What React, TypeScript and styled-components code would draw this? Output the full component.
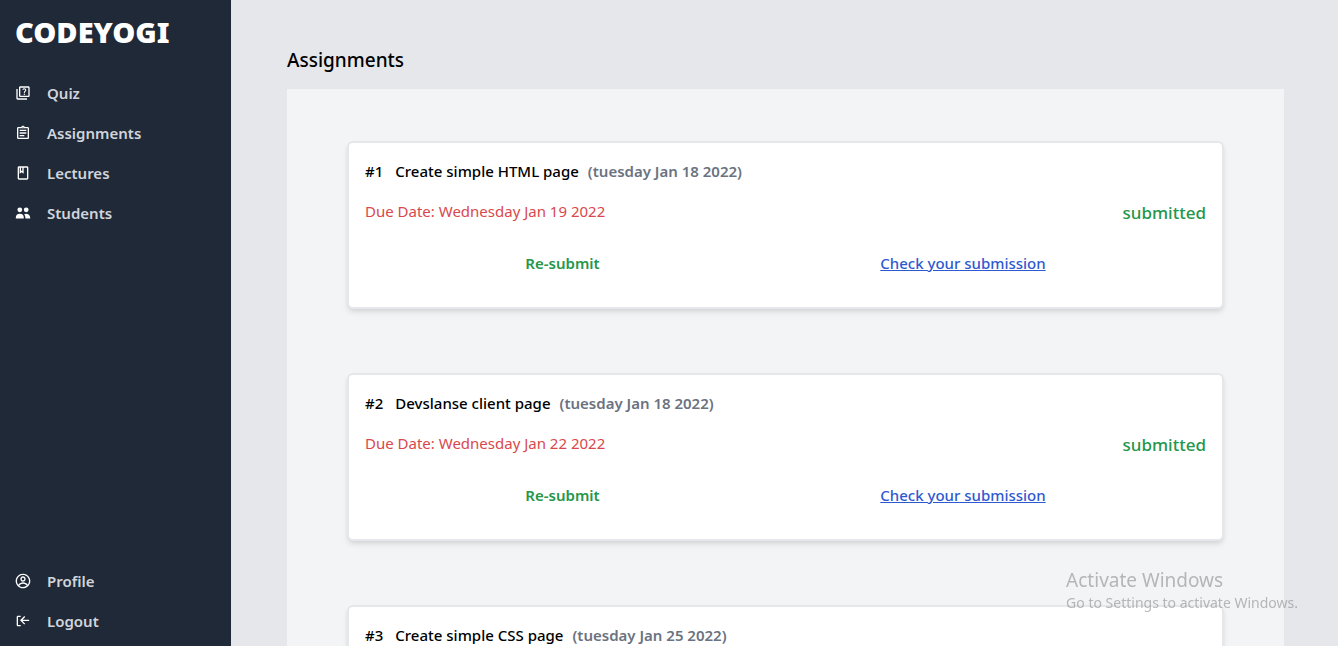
import React from "react";
import styled, { createGlobalStyle } from "styled-components";
import { MdOutlineQuiz, MdOutlineAssignment, MdOutlineClass } from "react-icons/md";
import { HiUsers } from "react-icons/hi";
import { CgProfile, CgLogOut } from "react-icons/cg";

const GlobalStyle = createGlobalStyle`
  *, *::before, *::after { box-sizing: border-box; }
  body {
    margin: 0;
    font-family: "Segoe UI", "Noto Sans", "Open Sans", sans-serif;
    font-size: 15px;
    line-height: 24px;
    color: #000;
  }
  h1, h2, p, ul { margin: 0; padding: 0; }
`;

const Shell = styled.div`
  display: flex;
  height: 100vh;
  background: #e5e7eb;
`;

const Sidebar = styled.aside`
  flex: none;
  width: 231px;
  display: flex;
  flex-direction: column;
  padding: 12px 15px 13px;
  background: #1f2937;
`;

const Logo = styled.div`
  margin-bottom: 29px;
  font-family: "Segoe UI Black", "Noto Sans", sans-serif;
  font-size: 29px;
  line-height: 40px;
  font-weight: 900;
  color: #fff;
`;

const NavList = styled.ul<{ $bottom?: boolean }>`
  display: flex;
  flex-direction: column;
  gap: 16px;
  list-style: none;
  margin-top: ${({ $bottom }) => ($bottom ? "auto" : "0")};
`;

const NavLink = styled.a`
  display: flex;
  align-items: center;
  gap: 16px;
  font-weight: 600;
  color: #d1d5db;
  text-decoration: none;

  svg {
    flex: none;
    width: 16px;
    height: 16px;
    color: #fff;
  }
`;

const Main = styled.main`
  flex: 1;
  min-width: 0;
  overflow-y: auto;
  scrollbar-width: none;
  padding: 46px 54px 56px 56px;
`;

const PageTitle = styled.h1`
  margin-bottom: 15px;
  font-size: 19px;
  line-height: 28px;
  font-weight: 500;
`;

const Panel = styled.div`
  display: flex;
  flex-direction: column;
  gap: 64px;
  padding: 52px 60px;
  background: #f3f4f6;
`;

const Card = styled.article`
  padding: 16px;
  background: #fff;
  border: 2px solid #e5e7eb;
  border-radius: 6px;
  box-shadow: 0 4px 6px -1px rgba(0, 0, 0, 0.1), 0 2px 4px -1px rgba(0, 0, 0, 0.06);
`;

const CardTitle = styled.h2`
  display: flex;
  font-size: 15px;
  line-height: 24px;
  font-weight: 500;
`;

const Name = styled.span`
  margin: 0 9px 0 12px;
`;

const Created = styled.span`
  color: #6b7280;
  font-weight: 600;
`;

const StatusRow = styled.div`
  display: flex;
  justify-content: space-between;
  margin-top: 16px;
`;

const DueDate = styled.p`
  font-weight: 400;
  color: #d9484c;
`;

const Status = styled.p`
  font-size: 17px;
  line-height: 28px;
  font-weight: 500;
  color: #25964a;
`;

const Actions = styled.div`
  display: flex;
  justify-content: space-around;
  padding: 24px 20px 16px;
`;

const Resubmit = styled.button`
  padding: 0;
  border: 0;
  background: none;
  font: inherit;
  font-weight: 600;
  color: #25964a;
  cursor: pointer;
`;

const SubmissionLink = styled.a`
  font-weight: 500;
  color: #2f59d0;
`;

const Activation = styled.div`
  position: fixed;
  right: 40px;
  bottom: 33px;
  color: rgba(120, 120, 120, 0.5);
  font-size: 14px;
  line-height: 20px;
  pointer-events: none;
`;

const ActivationTitle = styled.p`
  font-size: 19px;
  line-height: 26px;
`;

const assignments = [
  { id: 1, name: "Create simple HTML page", created: "tuesday Jan 18 2022", due: "Wednesday Jan 19 2022" },
  { id: 2, name: "Devslanse client page", created: "tuesday Jan 18 2022", due: "Wednesday Jan 22 2022" },
  { id: 3, name: "Create simple CSS page", created: "tuesday Jan 25 2022", due: "Wednesday Jan 26 2022" },
];

const mainLinks = [
  { label: "Quiz", Icon: MdOutlineQuiz },
  { label: "Assignments", Icon: MdOutlineAssignment },
  { label: "Lectures", Icon: MdOutlineClass },
  { label: "Students", Icon: HiUsers },
];

const accountLinks = [
  { label: "Profile", Icon: CgProfile },
  { label: "Logout", Icon: CgLogOut },
];

function Nav({ links, bottom }: { links: typeof mainLinks; bottom?: boolean }) {
  return (
    <NavList $bottom={bottom}>
      {links.map(({ label, Icon }) => (
        <li key={label}>
          <NavLink href={`#${label.toLowerCase()}`}>
            <Icon aria-hidden />
            {label}
          </NavLink>
        </li>
      ))}
    </NavList>
  );
}

export default function App() {
  return (
    <Shell>
      <GlobalStyle />
      <Sidebar>
        <Logo>CODEYOGI</Logo>
        <Nav links={mainLinks} />
        <Nav links={accountLinks} bottom />
      </Sidebar>
      <Main>
        <PageTitle>Assignments</PageTitle>
        <Panel>
          {assignments.map((a) => (
            <Card key={a.id}>
              <CardTitle>
                <span>#{a.id}</span>
                <Name>{a.name}</Name>
                <Created>({a.created})</Created>
              </CardTitle>
              <StatusRow>
                <DueDate>Due Date: {a.due}</DueDate>
                <Status>submitted</Status>
              </StatusRow>
              <Actions>
                <Resubmit type="button">Re-submit</Resubmit>
                <SubmissionLink href={`#submission-${a.id}`}>Check your submission</SubmissionLink>
              </Actions>
            </Card>
          ))}
        </Panel>
      </Main>
      <Activation>
        <ActivationTitle>Activate Windows</ActivationTitle>
        <p>Go to Settings to activate Windows.</p>
      </Activation>
    </Shell>
  );
}
